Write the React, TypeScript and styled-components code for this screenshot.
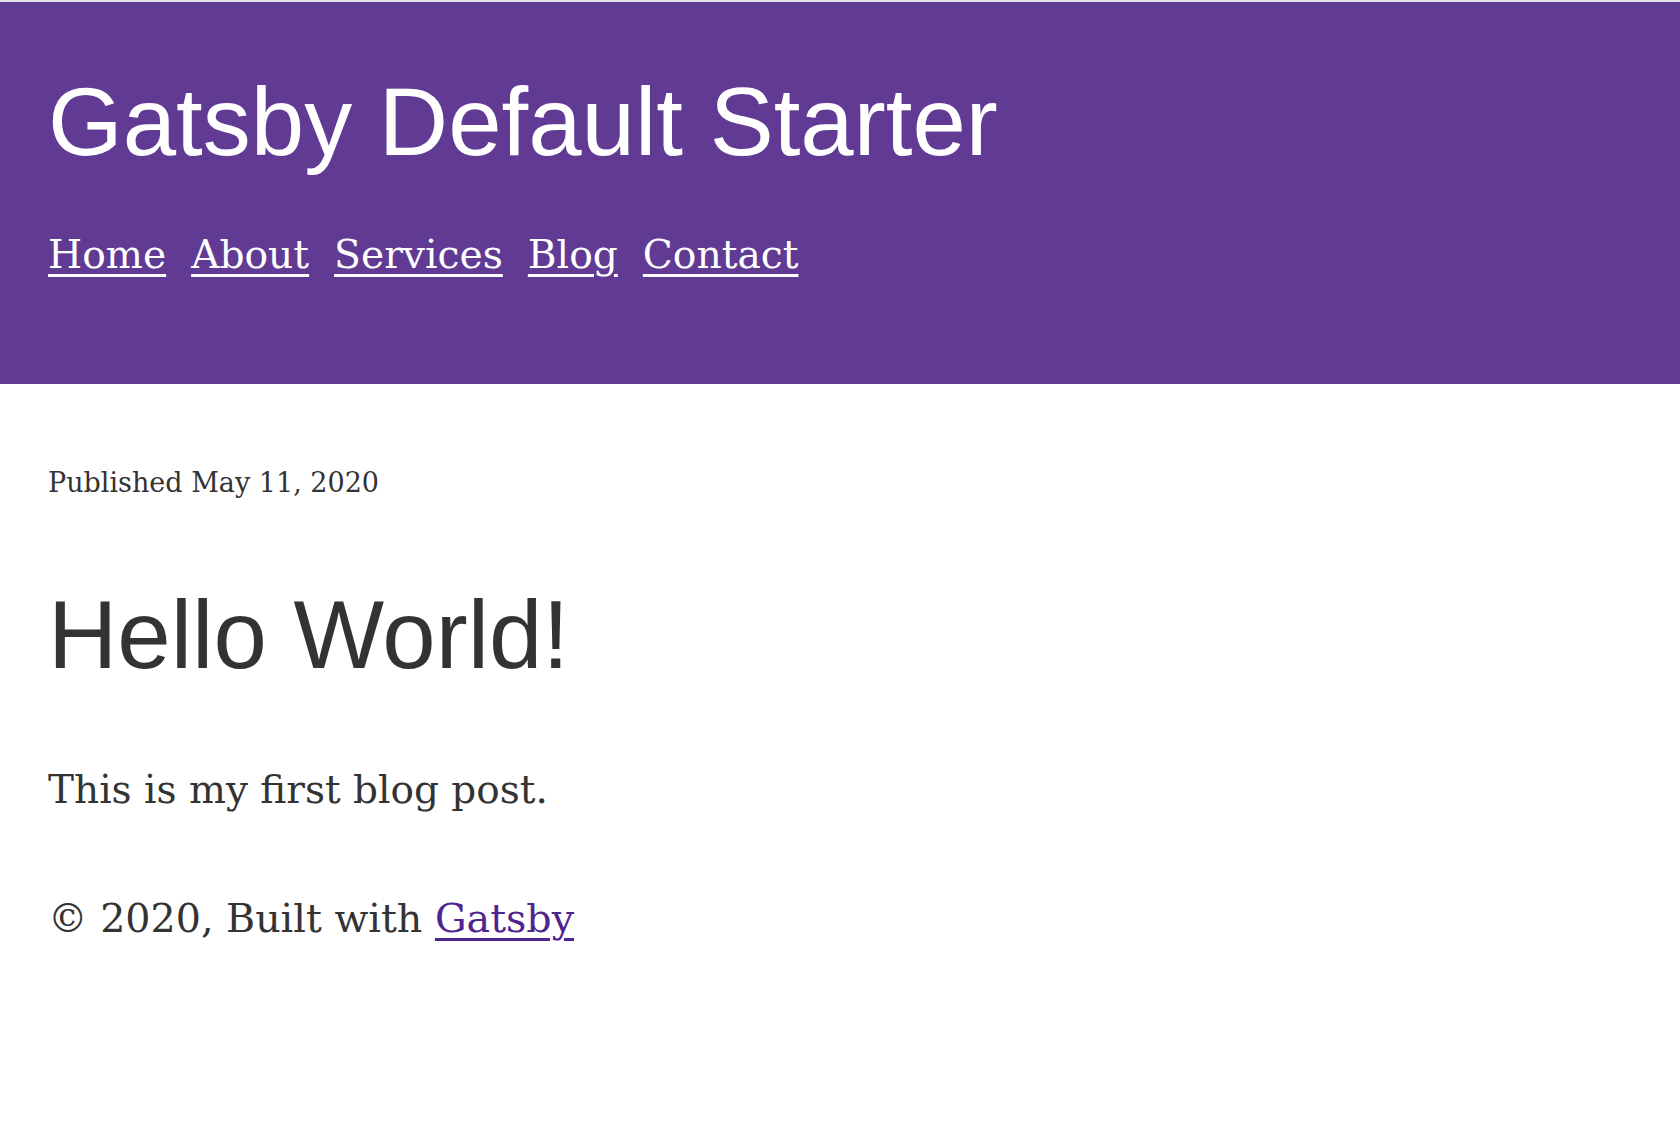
import React from "react";
import styled, { createGlobalStyle } from "styled-components";

const Global = createGlobalStyle`
  html, body { margin: 0; padding: 0; background: #ffffff; }
  body { font-family: "DejaVu Serif", "Liberation Serif", serif; color: #333333; }
`;

const Page = styled.div`
  border-top: 2px solid #e2e2e2;
  min-height: 1144px;
  display: flex;
  flex-direction: column;
`;

const Header = styled.header`
  background: #613a94;
  padding: 72px 48px 109px;
  display: flex;
  flex-direction: column;
  gap: 64px;
`;

const SiteTitle = styled.h1`
  margin: 0;
  font-family: "Liberation Sans", Arial, sans-serif;
  font-weight: 400;
  font-size: 96px;
  line-height: 1;
  color: #ffffff;
`;

const Nav = styled.nav`
  display: flex;
  gap: 25px;
`;

const NavLink = styled.a`
  font-family: "DejaVu Serif", "Liberation Serif", serif;
  font-size: 39.2px;
  line-height: 41px;
  color: #ffffff;
  text-decoration: underline;
  text-decoration-thickness: 3px;
  text-underline-offset: 6px;
`;

const Main = styled.main`
  padding: 83px 48px 0;
  display: flex;
  flex-direction: column;
`;

const Meta = styled.p`
  margin: 0 0 89px;
  font-size: 27px;
  line-height: 31px;
  color: #333333;
`;

const PostTitle = styled.h2`
  margin: 0 0 84px;
  font-family: "Liberation Sans", Arial, sans-serif;
  font-weight: 400;
  font-size: 96px;
  line-height: 1;
  color: #333333;
`;

const Body = styled.p`
  margin: 0 0 84px;
  font-size: 39px;
  line-height: 45px;
  color: #333333;
`;

const Footer = styled.footer`
  font-size: 39.6px;
  line-height: 45px;
  color: #333333;
`;

const FooterLink = styled.a`
  color: #4f2490;
  text-decoration: underline;
  text-decoration-thickness: 3px;
  text-underline-offset: 6px;
`;

const links = ["Home", "About", "Services", "Blog", "Contact"];

export default function App() {
  return (
    <>
      <Global />
      <Page>
        <Header>
          <SiteTitle>Gatsby Default Starter</SiteTitle>
          <Nav>
            {links.map((l) => (
              <NavLink key={l} href="#">
                {l}
              </NavLink>
            ))}
          </Nav>
        </Header>
        <Main>
          <Meta>Published May 11, 2020</Meta>
          <PostTitle>Hello World!</PostTitle>
          <Body>This is my first blog post.</Body>
          <Footer>
            © 2020, Built with <FooterLink href="#">Gatsby</FooterLink>
          </Footer>
        </Main>
      </Page>
    </>
  );
}
